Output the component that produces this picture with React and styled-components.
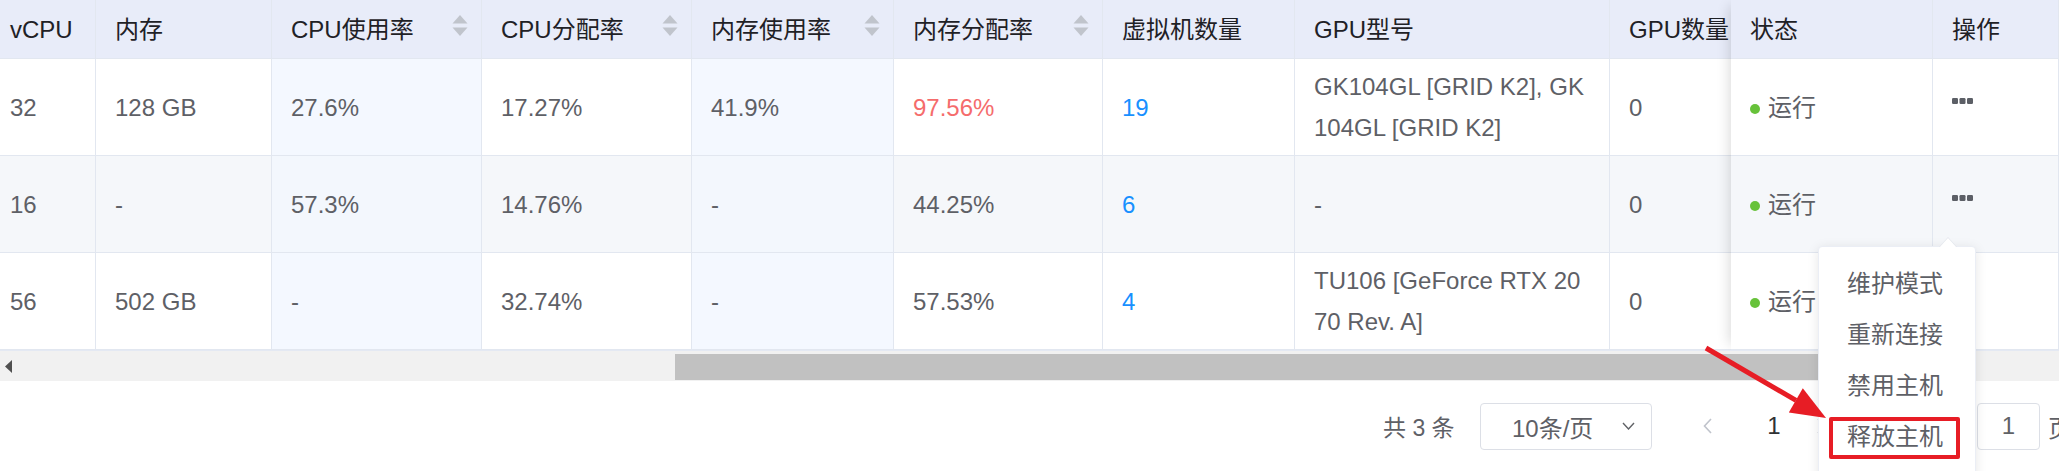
import React from 'react';
import styled, { createGlobalStyle } from 'styled-components';

const GlobalStyle = createGlobalStyle`
  html, body {
    margin: 0;
    padding: 0;
    background: #fff;
  }
  body {
    font-family: "Liberation Sans", "Noto Sans CJK SC", sans-serif;
  }
  * {
    box-sizing: border-box;
  }
`;

const Page = styled.div`
  position: relative;
  width: 2059px;
  height: 471px;
  overflow: hidden;
  background: #fff;
  font-size: 24px;
  color: #606266;
`;

const TableBox = styled.div`
  position: relative;
  overflow: hidden;
  border-bottom: 1px solid #e4e9f3;
`;

const Row = styled.div`
  display: grid;
  grid-template-columns: ${p => p.$cols};
  width: max-content;
  height: ${p => (p.$head ? '59px' : '97px')};
  background: ${p => (p.$head ? '#e8ecf9' : p.$stripe ? '#f5f7fa' : '#fff')};
`;

const Cell = styled.div`
  display: flex;
  align-items: center;
  justify-content: ${p => (p.$sort ? 'space-between' : 'flex-start')};
  padding: 0 ${p => (p.$sort ? '13px' : '19px')} 0 ${p => p.$pl || 19}px;
  border-right: 1px solid #e2e7f0;
  border-bottom: 1px solid #e2e7f0;
  background: ${p => (p.$hl ? (p.$stripe ? '#f3f7fd' : '#f4f8ff') : 'transparent')};
  line-height: 41px;
  word-break: break-all;
  white-space: ${p => (p.$wrap ? 'normal' : 'nowrap')};
  color: ${p => (p.$tone === 'red' ? '#f56c6c' : p.$tone === 'blue' ? '#1890ff' : '#5e6066')};
`;

const HeadCell = styled(Cell)`
  color: #1f2126;
`;

const SortIcon = styled.svg`
  flex: none;
  margin-top: -7px;
`;

const FixedRight = styled.div`
  position: absolute;
  top: 0;
  right: 0;
  width: 328px;
  background: #fff;
  box-shadow: -8px 0 12px -6px rgba(0, 0, 0, 0.14);
`;

const Status = styled.span`
  display: flex;
  align-items: center;
  &::before {
    content: '';
    width: 10px;
    height: 10px;
    border-radius: 50%;
    background: #67c23a;
    margin: 4px 8px 0 0;
  }
`;

const More = styled.svg`
  margin-top: -12px;
`;

const ScrollTrack = styled.div`
  display: flex;
  align-items: stretch;
  height: 30px;
  background: #f1f1f1;
`;

const ScrollArrow = styled.div`
  width: 17px;
  display: flex;
  align-items: center;
  justify-content: center;
`;

const Thumb = styled.div`
  margin: 3px 0 1px 658px;
  width: 1230px;
  background: #c1c1c1;
`;

const Footer = styled.div`
  display: flex;
  align-items: center;
  height: 90px;
  padding-left: 1383px;
  white-space: nowrap;
  font-size: 23px;
  color: #5e6066;
`;

const Total = styled.span`
  width: 97px;
  flex: none;
`;

const SizeSelect = styled.div`
  flex: none;
  display: flex;
  align-items: center;
  justify-content: space-between;
  width: 172px;
  height: 47px;
  padding: 0 16px 0 31px;
  border: 1px solid #dcdfe6;
  border-radius: 4px;
  font-size: 24px;
  margin-right: 35px;
`;

const PageBtn = styled.div`
  flex: none;
  width: ${p => p.$w || 40}px;
  height: 47px;
  margin-left: ${p => p.$ml || 0}px;
  display: flex;
  align-items: center;
  justify-content: center;
  color: ${p => (p.$active ? '#303133' : '#c0c4cc')};
  font-size: 24px;
`;

const Jumper = styled.div`
  display: flex;
  align-items: center;
  margin-left: 128px;
  font-size: 24px;
`;

const JumpInput = styled.div`
  width: 63px;
  height: 47px;
  margin: 0 8px;
  border: 1px solid #dcdfe6;
  border-radius: 4px;
  display: flex;
  align-items: center;
  justify-content: center;
  color: #606266;
`;

const Dropdown = styled.ul`
  position: absolute;
  left: 1818px;
  top: 246px;
  width: 158px;
  height: 250px;
  margin: 0;
  padding: 11px 0 0;
  list-style: none;
  background: #fff;
  border: 1px solid #ebeef5;
  border-radius: 4px;
  box-shadow: 0 2px 12px rgba(0, 0, 0, 0.1);
  &::before,
  &::after {
    content: '';
    position: absolute;
    left: 120px;
    border: 9px solid transparent;
    border-top: 0;
  }
  &::before {
    top: -10px;
    border-bottom: 10px solid #e4e7ed;
  }
  &::after {
    top: -9px;
    border-bottom: 10px solid #fff;
  }
`;

const MenuItem = styled.li`
  height: 51px;
  line-height: 51px;
  padding-left: 28px;
  font-size: 24px;
  color: #5e6066;
`;

const Highlight = styled.div`
  position: absolute;
  left: 1829px;
  top: 417px;
  width: 131px;
  height: 42px;
  border: 4px solid #e71d25;
  border-radius: 2px;
`;

const Pointer = styled.svg`
  position: absolute;
  left: 1690px;
  top: 335px;
`;

const columns = [
  { key: 'vcpu', title: 'vCPU', w: 96, pl: 10 },
  { key: 'mem', title: '内存', w: 176 },
  { key: 'cpuUse', title: 'CPU使用率', w: 210, sort: true, hl: true },
  { key: 'cpuAlloc', title: 'CPU分配率', w: 210, sort: true },
  { key: 'memUse', title: '内存使用率', w: 202, sort: true, hl: true },
  { key: 'memAlloc', title: '内存分配率', w: 209, sort: true },
  { key: 'vm', title: '虚拟机数量', w: 192, tone: 'blue' },
  { key: 'gpuModel', title: 'GPU型号', w: 315, wrap: true },
  { key: 'gpuCount', title: 'GPU数量', w: 200 },
];

const rows = [
  { vcpu: '32', mem: '128 GB', cpuUse: '27.6%', cpuAlloc: '17.27%', memUse: '41.9%', memAlloc: '97.56%', memAllocTone: 'red', vm: '19', gpuModel: 'GK104GL [GRID K2], GK104GL [GRID K2]', gpuCount: '0', more: true },
  { vcpu: '16', mem: '-', cpuUse: '57.3%', cpuAlloc: '14.76%', memUse: '-', memAlloc: '44.25%', vm: '6', gpuModel: '-', gpuCount: '0', more: true },
  { vcpu: '56', mem: '502 GB', cpuUse: '-', cpuAlloc: '32.74%', memUse: '-', memAlloc: '57.53%', vm: '4', gpuModel: 'TU106 [GeForce RTX 2070 Rev. A]', gpuCount: '0', more: false },
];

const mainCols = columns.map(c => c.w + 'px').join(' ');
const fixedCols = '202px 126px';

const Caret = () => (
  <SortIcon width="16" height="21" viewBox="0 0 16 21">
    <polygon points="8,0 15.5,8.5 0.5,8.5" fill="#c0c4cc" />
    <polygon points="0.5,12.5 15.5,12.5 8,21" fill="#c0c4cc" />
  </SortIcon>
);

const MoreIcon = () => (
  <More width="21" height="6" viewBox="0 0 21 6">
    <rect x="0" y="0" width="6" height="6" rx="1.2" fill="#5c5f66" />
    <rect x="7.5" y="0" width="6" height="6" rx="1.2" fill="#5c5f66" />
    <rect x="15" y="0" width="6" height="6" rx="1.2" fill="#5c5f66" />
  </More>
);

export default function App() {
  return (
    <Page>
      <GlobalStyle />
      <TableBox>
        <Row $head $cols={mainCols}>
          {columns.map(c => (
            <HeadCell key={c.key} $sort={c.sort} $pl={c.pl}>
              <span>{c.title}</span>
              {c.sort && <Caret />}
            </HeadCell>
          ))}
        </Row>
        {rows.map((r, i) => (
          <Row key={i} $cols={mainCols} $stripe={i === 1}>
            {columns.map(c => (
              <Cell
                key={c.key}
                $pl={c.pl}
                $hl={c.hl}
                $stripe={i === 1}
                $wrap={c.wrap}
                $tone={r[c.key + 'Tone'] || c.tone}
              >
                {r[c.key]}
              </Cell>
            ))}
          </Row>
        ))}

        <FixedRight>
          <Row $head $cols={fixedCols}>
            <HeadCell>状态</HeadCell>
            <HeadCell>操作</HeadCell>
          </Row>
          {rows.map((r, i) => (
            <Row key={i} $cols={fixedCols} $stripe={i === 1}>
              <Cell>
                <Status>运行</Status>
              </Cell>
              <Cell>{r.more && <MoreIcon />}</Cell>
            </Row>
          ))}
        </FixedRight>
      </TableBox>

      <ScrollTrack>
        <ScrollArrow>
          <svg width="7" height="13" viewBox="0 0 7 13">
            <polygon points="7,0 7,13 0,6.5" fill="#505050" />
          </svg>
        </ScrollArrow>
        <Thumb />
      </ScrollTrack>

      <Footer>
        <Total>共 3 条</Total>
        <SizeSelect>
          <span>10条/页</span>
          <svg width="13" height="8" viewBox="0 0 13 8">
            <polyline points="1,1 6.5,7 12,1" fill="none" stroke="#606266" strokeWidth="1.4" />
          </svg>
        </SizeSelect>
        <PageBtn>
          <svg width="9" height="16" viewBox="0 0 9 16">
            <polyline points="8,1 1.5,8 8,15" fill="none" stroke="#c0c4cc" strokeWidth="1.6" />
          </svg>
        </PageBtn>
        <PageBtn $w={54} $ml={20} $active>1</PageBtn>
        <PageBtn>
          <svg width="9" height="16" viewBox="0 0 9 16">
            <polyline points="1,1 7.5,8 1,15" fill="none" stroke="#c0c4cc" strokeWidth="1.6" />
          </svg>
        </PageBtn>
        <Jumper>
          <JumpInput>1</JumpInput>
          页
        </Jumper>
      </Footer>

      <Dropdown>
        <MenuItem>维护模式</MenuItem>
        <MenuItem>重新连接</MenuItem>
        <MenuItem>禁用主机</MenuItem>
        <MenuItem>释放主机</MenuItem>
      </Dropdown>

      <Highlight />

      <Pointer width="150" height="95" viewBox="0 0 150 95">
        <line x1="16" y1="13" x2="106" y2="65.4" stroke="#e71d25" strokeWidth="5" />
        <polygon points="136,83 98.8,77.5 112.8,53.3" fill="#e71d25" />
      </Pointer>
    </Page>
  );
}
